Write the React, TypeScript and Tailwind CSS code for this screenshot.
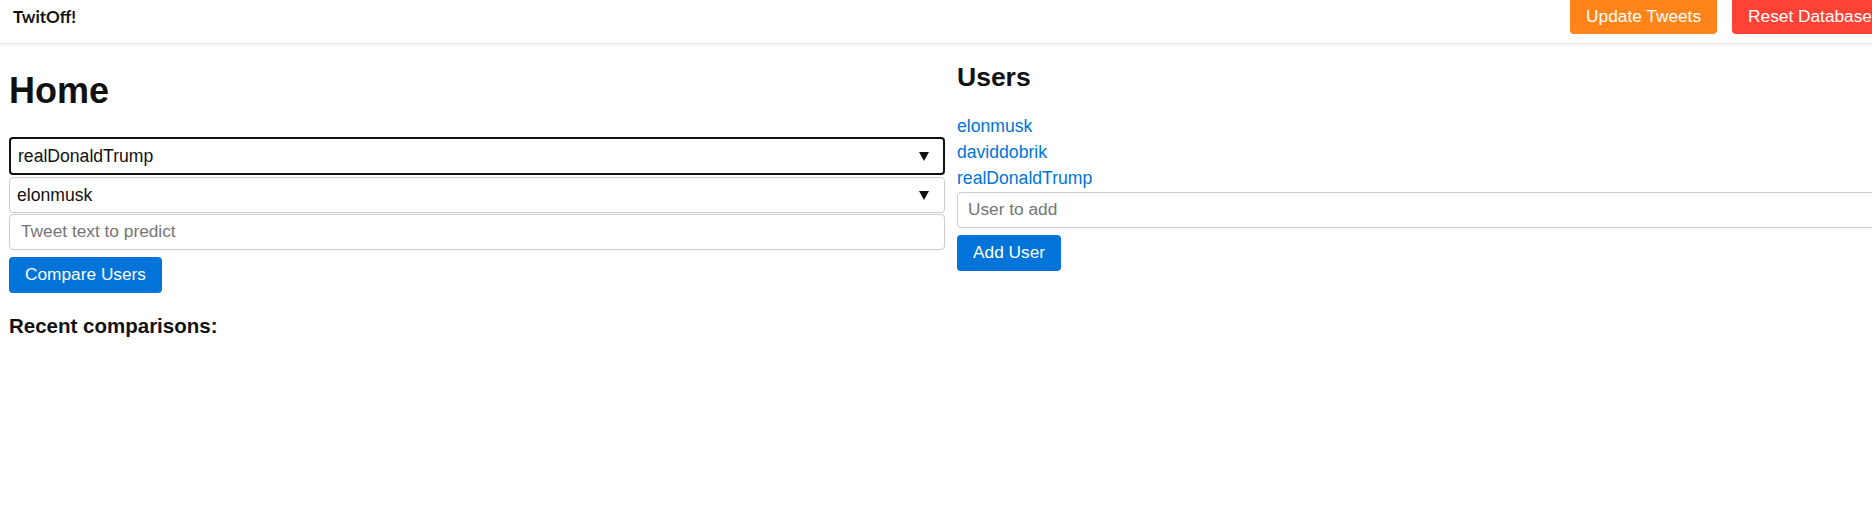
import React from 'react';

const users = ['elonmusk', 'daviddobrik', 'realDonaldTrump'];

function Arrow() {
  return (
    <svg className="w-[10px] h-[9px] shrink-0" viewBox="0 0 10 9">
      <path d="M0 0h10L5 9z" fill="#111" />
    </svg>
  );
}

export default function App() {
  return (
    <div className="w-[1872px] h-[514px] overflow-hidden bg-white text-[#111] font-['Liberation_Sans',Arial,sans-serif] text-[17.6px]">
      <nav className="h-[44px] flex justify-between items-start border-b border-[#e6e6e6] shadow-[0_1px_2px_rgba(17,17,17,0.06)]">
        <div className="pl-[13px] pt-[5px] font-['Lato',sans-serif] font-bold text-[17px] leading-[24px]">TwitOff!</div>
        <div className="flex gap-[15px] -mr-[16px] text-[17.3px]">
          <button className="h-[34px] px-[16px] rounded-b-[4px] bg-[#ff851b] text-white leading-none">Update Tweets</button>
          <button className="h-[34px] px-[16px] rounded-b-[4px] bg-[#ff4136] text-white leading-none whitespace-nowrap">Reset Database</button>
        </div>
      </nav>

      <main className="flex gap-[12px] pl-[9px]">
        <section className="w-[936px] shrink-0 flex flex-col">
          <h1 className="mt-[24px] text-[36px] leading-[46px] font-bold">Home</h1>

          <div className="mt-[23px] h-[38px] rounded-[4px] border-2 border-[#111] flex items-center justify-between pl-[7px] pr-[14px]">
            <span>realDonaldTrump</span>
            <Arrow />
          </div>
          <div className="mt-[2px] h-[36px] rounded-[4px] border border-[#ccc] flex items-center justify-between pl-[7px] pr-[15px]">
            <span>elonmusk</span>
            <Arrow />
          </div>
          <div className="mt-[1px] h-[36px] rounded-[4px] border border-[#ccc] flex items-center pl-[11px] text-[#757575] text-[17.3px]">
            Tweet text to predict
          </div>
          <div className="mt-[7px]">
            <button className="h-[36px] px-[16px] rounded-[4px] bg-[#0074d9] text-white leading-none text-[17.3px]">Compare Users</button>
          </div>

          <h3 className="mt-[21px] font-bold text-[20.5px] leading-[23px]">Recent comparisons:</h3>
        </section>

        <section className="w-[936px] shrink-0 flex flex-col">
          <h2 className="mt-[18px] text-[26.5px] leading-[30px] font-bold">Users</h2>
          <ul className="mt-[21px] flex flex-col">
            {users.map((u) => (
              <li key={u} className="leading-[26px]">
                <a href="#" className="text-[#0074d9]">{u}</a>
              </li>
            ))}
          </ul>
          <div className="mt-[1px] h-[36px] rounded-[4px] border border-[#ccc] flex items-center pl-[10px] text-[#757575] text-[17.3px]">
            User to add
          </div>
          <div className="mt-[7px]">
            <button className="h-[36px] px-[16px] rounded-[4px] bg-[#0074d9] text-white leading-none text-[17.3px]">Add User</button>
          </div>
        </section>
      </main>
    </div>
  );
}
